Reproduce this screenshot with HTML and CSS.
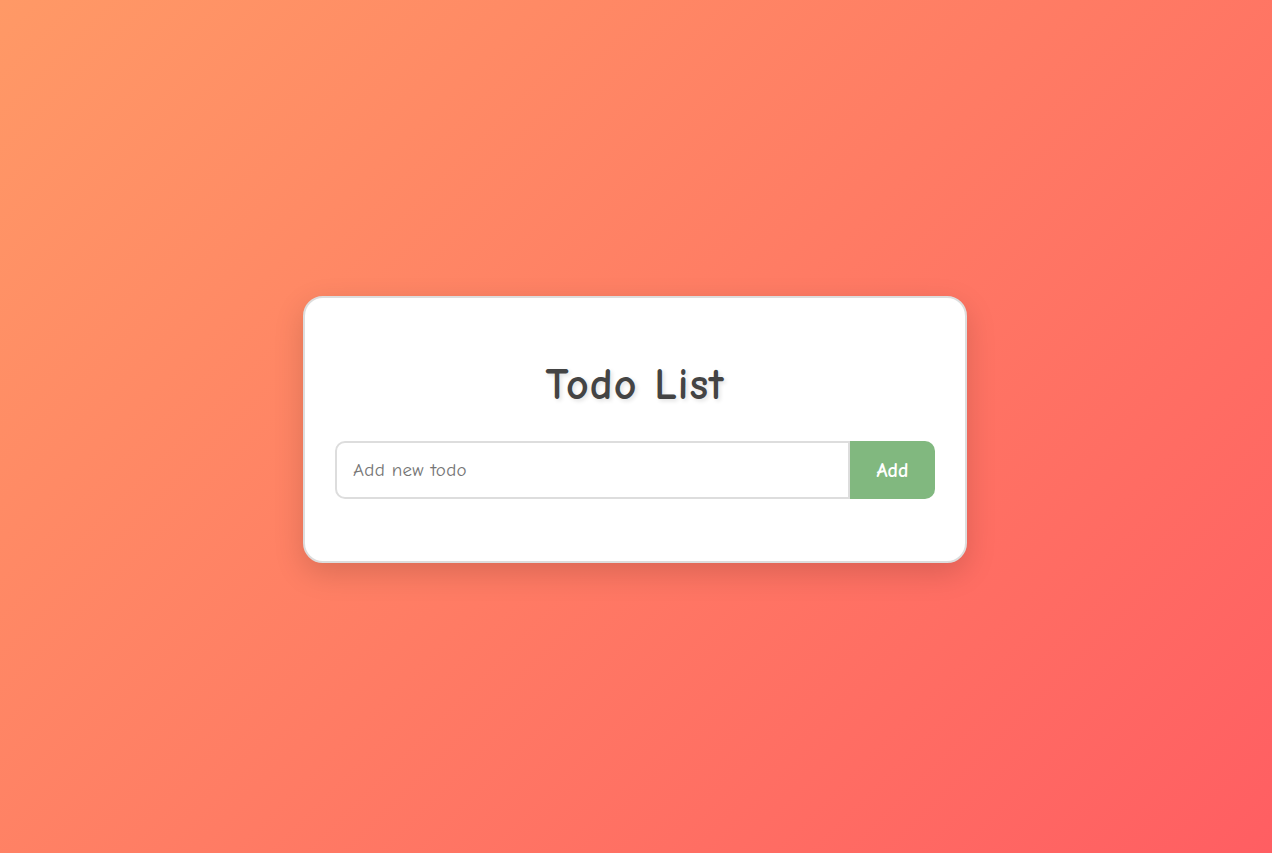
FILE: index.html
```html
<!DOCTYPE html>
<html lang="en">
<head>
<meta charset="utf-8">
<title>Todo List</title>
<link rel="stylesheet" href="styles.css">
</head>
<body>
  <div class="card">
    <h1 class="title">Todo List</h1>
    <form class="add-row" onsubmit="return false">
      <input class="todo-input" type="text" placeholder="Add new todo">
      <button class="add-btn" type="submit">Add</button>
    </form>
  </div>
</body>
</html>
```
FILE: styles.css
```css
* { box-sizing: border-box; }
html, body { height: 100%; }
body {
  margin: 0;
  padding: 6px 2px 0 0;
  min-height: 100vh;
  display: flex;
  align-items: center;
  justify-content: center;
  background: linear-gradient(135deg, #ff9966 0%, #ff5e62 100%);
  font-family: "Comic Sans MS", "Comic Neue", cursive, sans-serif;
}
.card {
  width: 664px;
  background: #fff;
  border: 2px solid #dddddd;
  border-radius: 20px;
  padding: 30px;
  box-shadow: 0 10px 30px rgba(0, 0, 0, 0.15);
}
.title {
  margin: 29px 0 28px;
  text-align: center;
  font-size: 44px;
  letter-spacing: 1px;
  font-weight: bold;
  line-height: 56px;
  color: #444;
  text-shadow: 2px 2px 4px rgba(0, 0, 0, 0.12);
}
.add-row {
  display: flex;
  margin: 0 0 32px;
}
.todo-input {
  flex: 1;
  height: 58px;
  padding: 0 16px;
  border: 2px solid #dddddd;
  border-radius: 10px 0 0 10px;
  font-family: inherit;
  font-size: 19px;
  letter-spacing: 0.3px;
  color: #444;
  outline: none;
}
.todo-input::placeholder { color: #757575; }
.add-btn {
  width: 85px;
  height: 58px;
  border: none;
  border-radius: 0 10px 10px 0;
  background: #81b87f;
  color: #fff;
  font-family: inherit;
  font-size: 20px;
  font-weight: bold;
  cursor: pointer;
}
```
